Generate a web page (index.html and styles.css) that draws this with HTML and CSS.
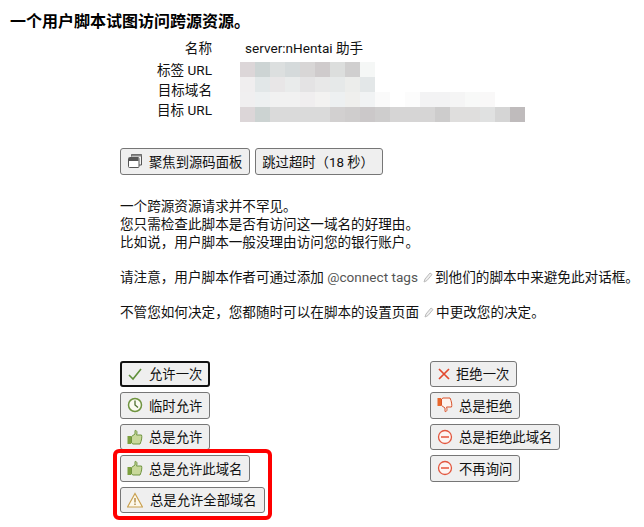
FILE: index.html
```html
<!DOCTYPE html>
<html lang="zh-CN">
  <head>
    <meta charset="UTF-8" />
    <meta name="viewport" content="width=device-width, initial-scale=1.0" />
    <title>一个用户脚本试图访问跨源资源</title>
    <link rel="stylesheet" href="styles.css">
  </head>
  <body>
    <h1>一个用户脚本试图访问跨源资源。</h1>

    <div class="info">
      <div class="info-labels">
        <div class="label-first">名称</div>
        <div>标签 URL</div>
        <div>目标域名</div>
        <div>目标 URL</div>
      </div>
      <div class="info-values">
        <div class="script-name">server:nHentai 助手</div>
        <div class="mosaic mosaic-tab"></div>
        <div class="mosaic mosaic-domain"></div>
        <div class="mosaic mosaic-pale"></div>
        <div class="mosaic mosaic-url"></div>
      </div>
    </div>

    <div class="top-buttons">
      <button>
        <svg class="icon" viewBox="0 0 16 16"><path d="M4.500 3.500V1.500h10v10.500H12" fill="#f4f4f4" stroke="#555"/><rect x="4.500" y="1.500" width="10" height="2" fill="#888"/><rect x="1.500" y="4.500" width="10.500" height="10" rx="1" fill="#fff" stroke="#555"/><rect x="2" y="5" width="9.500" height="3" fill="#555"/></svg>
        聚焦到源码面板
      </button>
      <button class="skip">跳过超时（18 秒）</button>
    </div>

    <div class="notes">
      <p>一个跨源资源请求并不罕见。<br>您只需检查此脚本是否有访问这一域名的好理由。<br>比如说，用户脚本一般没理由访问您的银行账户。</p>
      <p>请注意，用户脚本作者可通过添加 <span class="link">@connect tags</span><svg class="pencil" viewBox="0 0 10 12"><path d="M1 11l1-3 5-6 2 1.500-5 6z" fill="#eee" stroke="#bbb"/></svg>到他们的脚本中来避免此对话框。</p>
      <p>不管您如何决定，您都随时可以在脚本的设置页面<svg class="pencil" viewBox="0 0 10 12"><path d="M1 11l1-3 5-6 2 1.500-5 6z" fill="#eee" stroke="#bbb"/></svg>中更改您的决定。</p>
    </div>

    <div class="choices">
      <div class="choice-col">
        <button class="focused">
          <svg class="icon" viewBox="0 0 16 16"><path d="M2 9l4 4 8-10" fill="none" stroke="#5f8f3a" stroke-width="1.600"/></svg>
          允许一次
        </button>
        <button>
          <svg class="icon" viewBox="0 0 16 16"><circle cx="8" cy="8" r="6.500" fill="#fafaf0" stroke="#6f9440" stroke-width="1.500"/><path d="M8 3.500V8l3 2.500" fill="none" stroke="#4e6f30" stroke-width="1.300"/></svg>
          临时允许
        </button>
        <button>
          <svg class="icon" viewBox="0 0 16 16"><rect x="0.500" y="7" width="3.500" height="8" fill="#7da03f"/><path d="M4.500 7.500 8 5V1.500c2-.5 2.500 2 1.500 4.500h5c.8 1.500 0 6-1.500 9H6l-1.500-1z" fill="#c8d89a" stroke="#6f9440"/></svg>
          总是允许
        </button>
        <div class="highlight">
          <button>
            <svg class="icon" viewBox="0 0 16 16"><rect x="0.500" y="7" width="3.500" height="8" fill="#7da03f"/><path d="M4.500 7.500 8 5V1.500c2-.5 2.500 2 1.500 4.500h5c.8 1.500 0 6-1.500 9H6l-1.500-1z" fill="#c8d89a" stroke="#6f9440"/></svg>
            总是允许此域名
          </button>
          <button>
            <svg class="icon icon-wide" viewBox="0 0 16 16"><path d="M8 1.500 15.500 15H.5z" fill="#fdf8ea" stroke="#c9a04f" stroke-width="1.200"/><path d="M8 6v4.500M8 11.500v1.500" stroke="#a8803a" stroke-width="1.300"/></svg>
            总是允许全部域名
          </button>
        </div>
      </div>
      <div class="choice-col choice-col-right">
        <button>
          <svg class="icon icon-cross" viewBox="2 2 12 12"><path d="M3 3l10 10M13 3 3 13" stroke="#e2492f" stroke-width="1.700"/></svg>
          拒绝一次
        </button>
        <button>
          <svg class="icon" viewBox="0 0 16 16"><rect x="0.500" y="1" width="3.500" height="8" fill="#e8672c"/><path d="M4.500 8.500 8 11v3.500c2 .5 2.500-2 1.500-4.500h5c.8-1.500 0-6-1.500-9H6L4.500 2z" fill="#fdf3ee" stroke="#d9532c"/></svg>
          总是拒绝
        </button>
        <button>
          <svg class="icon" viewBox="0 0 16 16"><circle cx="8" cy="8" r="6.500" fill="#fdf5f2" stroke="#e2573f" stroke-width="1.300"/><path d="M4 8h8" stroke="#e2492f" stroke-width="1.400"/></svg>
          总是拒绝此域名
        </button>
        <button>
          <svg class="icon" viewBox="0 0 16 16"><circle cx="8" cy="8" r="6.500" fill="#fdf5f2" stroke="#e2573f" stroke-width="1.300"/><path d="M4 8h8" stroke="#e2492f" stroke-width="1.400"/></svg>
          不再询问
        </button>
      </div>
    </div>
  </body>
</html>
```

FILE: styles.css
```css
body {
  font-family: Roboto, "Noto Sans CJK SC", sans-serif;
  font-size: 13.6px;
  color: #111;
  margin: 0;
  padding: 12px 0 13px 10px;
  background-color: #fff;
}
h1 {
  font-size: 16px;
  line-height: 20px;
  margin: 0;
  color: #000;
}
button {
  display: flex;
  align-items: center;
  gap: 6px;
  width: fit-content;
  height: 26.5px;
  padding: 0 7px 0 6px;
  font-family: inherit;
  font-size: 13.33px;
  color: #111;
  white-space: nowrap;
  background-color: #efefef;
  border: 1px solid #767676;
  border-radius: 3px;
}
.skip {
  padding-right: 8px;
}
.icon {
  width: 16px;
  height: 16px;
  flex: none;
}
.icon-wide {
  margin-right: 1px;
}
.icon-cross {
  width: 12px;
  height: 12px;
  margin-left: 1px;
}
.pencil {
  width: 10px;
  height: 12px;
  margin: 0 2px 0 5px;
  vertical-align: -1px;
}
.link {
  color: #555;
}

.info {
  display: flex;
  margin-top: 6px;
}
.info-labels {
  width: 202px;
  text-align: right;
  line-height: 20px;
}
.label-first {
  margin-bottom: 2px;
}
.info-values {
  margin-left: 28px;
  line-height: 20px;
}
.script-name {
  padding-left: 5px;
  height: 24px;
  line-height: 20px;
}
.mosaic {
  height: 15px;
}
.mosaic-tab {
  width: 135px;
  background: linear-gradient(to right, #dcd6d8 0 15px, #cdd4d4 15px 30px, #dcdfdf 30px 45px, #d5dadb 45px 60px, #d8d6d6 60px 75px, #cfcbcc 75px 90px, #dcdedd 90px 105px, #d0cfcf 105px 120px, #f5f7f6 120px);
}
.mosaic-domain {
  width: 135px;
  background: linear-gradient(to right, #f0eeef 0 15px, #e2e7e8 15px 30px, #e8e6e7 30px 45px, #e9ebeb 45px 60px, #e4e3e4 60px 75px, #e8e8e8 75px 90px, #e6e9e9 90px 105px, #ecedeb 105px 120px, #e3e7e8 120px);
}
.mosaic-pale {
  width: 270px;
  background: linear-gradient(to right, #f0eff0 0 15px, #edf0f1 15px 30px, #f1f1f1 30px 60px, #f0eeef 60px 75px, #f3f2f1 75px 90px, #edf0f1 90px 105px, #efefed 105px 120px, #f1f3f4 120px 135px, #fafafa 135px 150px, #fff 150px 165px, #fcfcfc 165px 180px, #f3f3f4 180px 210px, #f5f5f5 210px 225px, #f8f9f8 225px 240px, #f9f8f8 240px 255px, #fff 255px);
}
.mosaic-url {
  width: 285px;
  background: linear-gradient(to right, #dcd6d8 0 15px, #ccd3d2 15px 30px, #dadada 30px 90px, #d2d0d0 90px 105px, #cfcdcd 105px 120px, #cbc8c9 120px 135px, #cecdcd 135px 150px, #d6d5d5 150px 195px, #cdcccc 195px 210px, #dfdedd 210px 240px, #e0e1e1 240px 255px, #d5d5d5 255px 270px, #bfbbbc 270px);
}

.top-buttons {
  display: flex;
  gap: 5px;
  margin: 26px 0 0 110px;
}
.notes {
  margin: 22px 0 0 110px;
  line-height: 18px;
}
.notes p {
  margin: 0 0 17px;
}
.choices {
  display: flex;
  margin: 40px 0 0 110px;
}
.choice-col {
  display: flex;
  flex: none;
  flex-direction: column;
  gap: 5px;
  width: 310px;
}
.choice-col-right {
  width: 200px;
}
.focused {
  border: 2px solid #101010;
  padding: 0 6px 0 5px;
}
.highlight {
  position: relative;
  display: flex;
  flex-direction: column;
  gap: 5px;
  width: fit-content;
}
/* red annotation drawn over the two buttons */
.highlight::after {
  content: '';
  position: absolute;
  inset: -6px -7px -7px -7px;
  border: 4px solid #f00;
  border-radius: 6px;
  pointer-events: none;
}
```
